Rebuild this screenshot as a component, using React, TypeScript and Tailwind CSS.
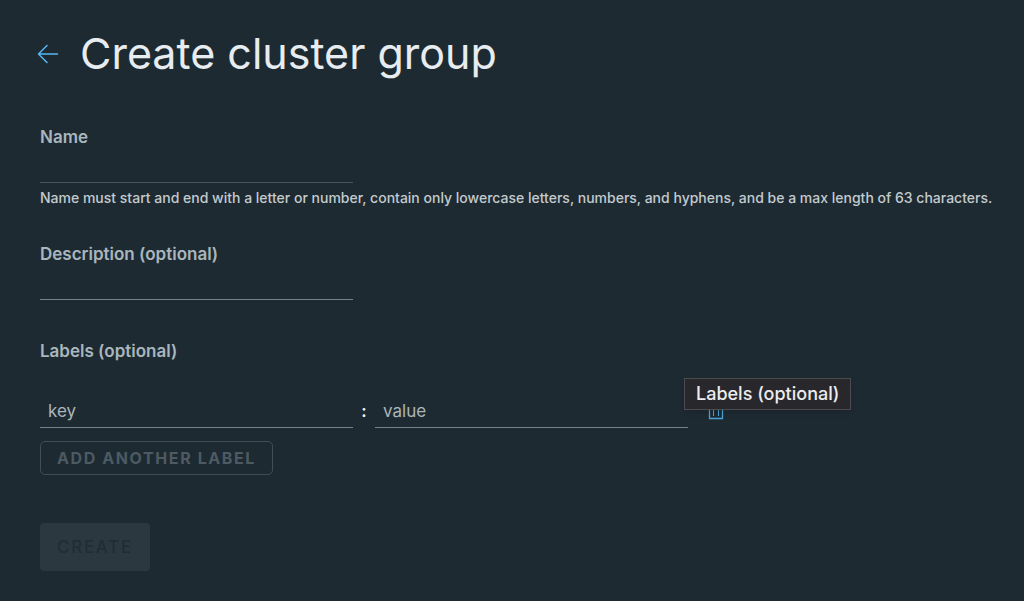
import React from "react";

const inputClass =
  "block h-[34px] border-0 border-b bg-transparent px-2 text-[17px] text-[#dde5e9] placeholder-[#acb5b9] outline-none";
const labelClass = "block text-[17px] leading-6 font-semibold text-[#a9b6be]";

function ArrowLeft() {
  return (
    <svg width="22" height="20" viewBox="0 0 22 20" fill="none" stroke="#56b7f1" strokeWidth="1.500" strokeLinecap="round" strokeLinejoin="round" aria-hidden="true">
      <path d="M20.500 10H1.500M10 1.500L1.500 10L10 18.500" />
    </svg>
  );
}

function Trash() {
  return (
    <svg width="16" height="18" viewBox="0 0 16 18" fill="none" stroke="#4aa3d6" aria-hidden="true">
      <path d="M0 3.500H16M5.500 3V.5H10.500V3M1.500 3.500V16.500H14.500V3.500" strokeWidth="1.300" />
      <path d="M5.500 6.500V14M10.500 6.500V14" strokeWidth="1" />
    </svg>
  );
}

export default function App() {
  return (
    <main className="min-h-screen bg-[#1e2a32] px-10 pt-6 pb-7 font-['Inter',sans-serif]">
      <header className="-ml-[3px] flex h-15 items-center gap-[21px]">
        <a href="#groups" aria-label="Back to cluster groups" className="shrink-0">
          <ArrowLeft />
        </a>
        <h1 className="pb-0.5 text-[43px] leading-none font-normal whitespace-nowrap text-[#e6ecef]">Create cluster group</h1>
      </header>

      <form className="mt-[41px]" onSubmit={(e) => e.preventDefault()}>
        <div>
          <label htmlFor="name" className={labelClass}>Name</label>
          <input id="name" type="text" className={`${inputClass} w-[313px] max-w-full border-[#47535a]`} aria-describedby="name-help" />
          <p id="name-help" className="text-sm leading-[30px] font-medium text-[#c3cbcf] lg:whitespace-nowrap">
            Name must start and end with a letter or number, contain only lowercase letters, numbers, and hyphens, and be a max length of 63 characters.
          </p>
        </div>

        <div className="mt-[29px]">
          <label htmlFor="description" className={labelClass}>Description (optional)</label>
          <input id="description" type="text" className={`${inputClass} w-[313px] max-w-full border-[#75828a]`} />
        </div>

        <fieldset className="mt-[39px]">
          <legend className={labelClass}>Labels (optional)</legend>
          <div className="mt-[31px] flex items-center">
            <input aria-label="Label key" placeholder="key" className={`${inputClass} w-[313px] min-w-0 border-[#75828a]`} />
            <span className="w-[22px] shrink-0 text-center text-[17px] leading-6 font-semibold text-[#f0f3f5]">:</span>
            <input aria-label="Label value" placeholder="value" className={`${inputClass} w-[313px] min-w-0 border-[#75828a]`} />
            <div className="relative ml-5 shrink-0">
              <button type="button" aria-label="Delete label" className="block">
                <Trash />
              </button>
              <div role="tooltip" className="absolute bottom-[10px] -left-6 flex h-8 items-center border border-[#4b4b50] bg-[#28282c] px-[11px] text-lg leading-none font-medium whitespace-nowrap text-[#ececee] shadow-md">
                Labels (optional)
              </div>
            </div>
          </div>
          <button type="button" disabled className="mt-[13px] block h-[34px] rounded-[5px] border border-[#414e56] px-4 text-base leading-none font-bold tracking-widest whitespace-nowrap text-[#4d5a62] uppercase">
            Add another label
          </button>
        </fieldset>

        <button type="submit" disabled className="mt-12 block h-12 rounded bg-[#2c3840] px-[17px] text-[17px] leading-none font-medium tracking-widest text-[#202d35] uppercase">
          Create
        </button>
      </form>
    </main>
  );
}
